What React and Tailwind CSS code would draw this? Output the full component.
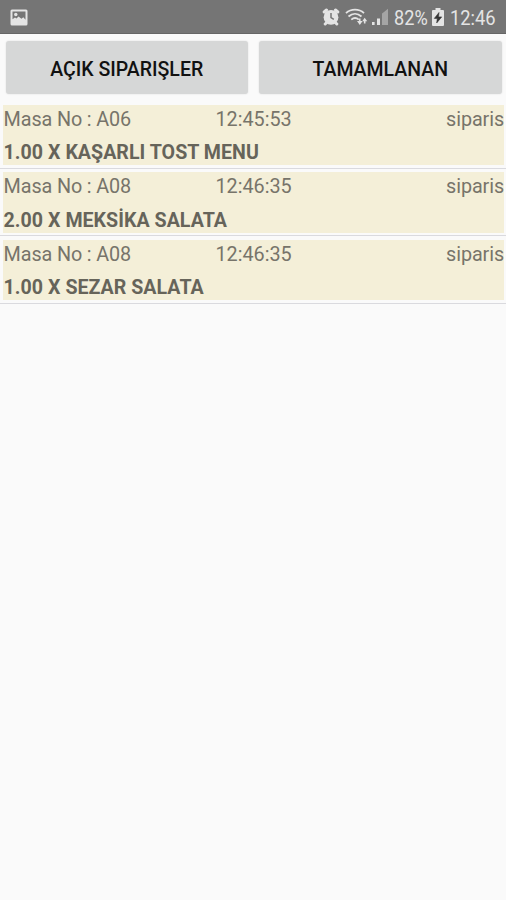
import { useState } from "react"

const orders = [
  { id: 1, table: "A06", time: "12:45:53", status: "siparis", item: "1.00 X KAŞARLI TOST MENU" },
  { id: 2, table: "A08", time: "12:46:35", status: "siparis", item: "2.00 X MEKSİKA SALATA" },
  { id: 3, table: "A08", time: "12:46:35", status: "siparis", item: "1.00 X SEZAR SALATA" },
]

function StatusBar() {
  return (
    <header className="flex h-[34px] items-center border-b border-[#666666] bg-[#757575] pt-px pr-[10px] pl-[10px] text-[#e4e4e4]">
      <svg className="h-[17px] w-[18px]" viewBox="0 0 18 17">
        <rect x="0.5" y="0.5" width="17" height="16" rx="1.5" fill="#e4e4e4" />
        <path d="M2.5 2.5h13v8.2l-2.2-2.5-1.8 1.6-3-2.4-2 2.2-1.5-1-2.5 1.6z" fill="#757575" />
        <circle cx="5.8" cy="5.5" r="1.7" fill="#e4e4e4" />
      </svg>

      <div className="ml-auto flex items-center">
        <svg className="h-[18px] w-[18px]" viewBox="0 0 18 18">
          <circle cx="9" cy="9.3" r="7.4" fill="#e4e4e4" />
          <path d="M2.2 4 4.5 2M15.8 4l-2.3-2M3.2 16l2-2M14.8 16l-2-2" stroke="#e4e4e4" strokeWidth="3" strokeLinecap="round" />
          <path d="M9 5v4.6l2.8 1.8" fill="none" stroke="#757575" strokeWidth="1.5" />
        </svg>
        <svg className="ml-[5px] h-[18px] w-[24px]" viewBox="0 0 24 18" fill="none" stroke="#e4e4e4" strokeWidth="1.8">
          <path d="M1 5.2C6 .5 14 .5 19 5.2M3.5 8.5c4-3.6 9-3.6 13 0M6.3 11.6c2.5-2.1 5-2.1 7.5 0" />
          <path d="M14.8 10.5v3" strokeWidth="1.5" />
          <path d="M12 13h5.6l-2.8 4zM17.2 13.2l2.5-3.4 2.5 3.4h-1.7v2.4h-1.6v-2.4z" fill="#e4e4e4" stroke="none" />
        </svg>
        <svg className="ml-[2px] h-[18px] w-[18px]" viewBox="0 0 18 18">
          <path d="M1 14h2.6v3H1zM6 10.5h3V17H6z" fill="#e4e4e4" />
          <path d="M11 5.5 13 4v13h-2zM13 4 17 .8V17h-4z" fill="#a5a5a5" />
        </svg>
        <span className="ml-[5px] w-[35px] pt-[3px] text-[19.5px] leading-none whitespace-nowrap">
          <span className="inline-block origin-left scale-x-[0.93]">82%</span>
        </span>
        <svg className="ml-[3px] h-[18px] w-[12px]" viewBox="0 0 12 18">
          <path d="M3.5 0h5v2H11q1 0 1 1v14q0 1-1 1H1q-1 0-1-1V3q0-1 1-1h2.5z" fill="#e4e4e4" />
          <path d="M7 4.5 2.3 10.4h3L4.7 15l5-6.1H6.5z" fill="#353535" stroke="#353535" strokeWidth="0.6" />
        </svg>
        <span className="ml-[6px] w-[46px] pt-[3px] text-[19.5px] leading-none whitespace-nowrap">
          <span className="inline-block origin-left scale-x-[0.94]">12:46</span>
        </span>
      </div>
    </header>
  )
}

function TabButton({ children, onClick }) {
  return (
    <button
      onClick={onClick}
      className="h-[53px] flex-1 rounded-[3px] bg-[#d6d7d7] pt-[4px] text-[19.5px] font-medium text-[#111111] shadow-[0_0_2px_rgba(0,0,0,0.12)]"
    >
      {children}
    </button>
  )
}

function OrderRow({ order }) {
  return (
    <li className="h-[67.5px] border-b-[1.5px] border-[#dadade] pt-[3.5px] pr-[2px] pl-[3px]">
      <div className="h-[60.5px] bg-[#f4efd8] text-[19.8px] text-[#77746a]">
        <div className="grid h-[29px] grid-cols-[212px_1fr_auto] items-center">
          <span className="pl-[0.6px] tracking-[-0.12px]">Masa No : {order.table}</span>
          <span className="pl-[0.4px]">{order.time}</span>
          <span className="tracking-[-0.1px]">{order.status}</span>
        </div>
        <p className="pt-[5.5px] pl-[0.6px] text-[19.6px] leading-[28px] font-bold tracking-[0.03px] text-[#66645a]">{order.item}</p>
      </div>
    </li>
  )
}

export default function App() {
  const [tab, setTab] = useState("open")
  const visible = tab === "open" ? orders : []

  return (
    <main className="min-h-screen bg-[#fafafa] font-['Roboto',sans-serif]">
      <StatusBar />
      <div className="flex h-[67px] gap-[11px] pt-[7px] pr-[4.5px] pl-[5.5px]">
        <TabButton onClick={() => setTab("open")}>AÇIK SIPARIŞLER</TabButton>
        <TabButton onClick={() => setTab("done")}>TAMAMLANAN</TabButton>
      </div>
      <ul>
        {visible.map((order) => (
          <OrderRow key={order.id} order={order} />
        ))}
      </ul>
    </main>
  )
}
